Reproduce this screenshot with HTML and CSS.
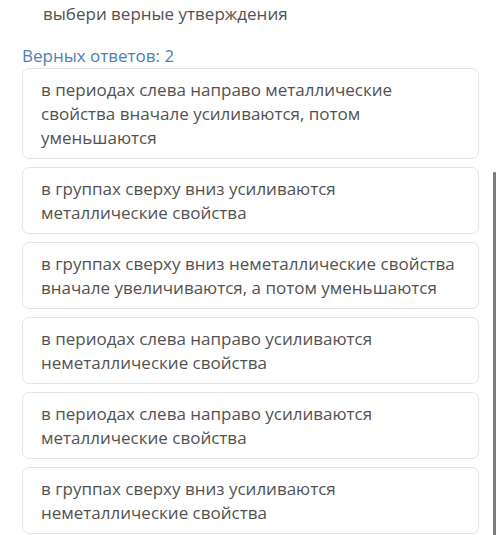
FILE: index.html
```html
<!DOCTYPE html>
<html lang="ru">
<head>
  <meta charset="UTF-8">
  <meta name="viewport" content="width=device-width, initial-scale=1.0">
  <title>выбери верные утверждения</title>
  <link rel="stylesheet" href="styles.css">
</head>
<body>
  <div class="quiz">
    <div class="question">выбери верные утверждения</div>

    <div class="hint">Верных ответов: 2</div>

    <div class="answers">
      <div class="answer">в периодах слева направо металлические свойства вначале усиливаются, потом уменьшаются</div>
      <div class="answer">в группах сверху вниз усиливаются металлические свойства</div>
      <div class="answer">в группах сверху вниз неметаллические свойства вначале увеличиваются, а потом уменьшаются</div>
      <div class="answer">в периодах слева направо усиливаются неметаллические свойства</div>
      <div class="answer">в периодах слева направо усиливаются металлические свойства</div>
      <div class="answer">в группах сверху вниз усиливаются неметаллические свойства</div>
    </div>
  </div>

  <!-- полоса прокрутки -->
  <div class="scrollbar"></div>
</body>
</html>
```

FILE: styles.css
```css
html,
body {
  margin: 0;
  background: #fff;
}

body {
  font-family: "Open Sans", "Liberation Sans", sans-serif;
  font-size: 17px;
  line-height: 24px;
  color: #525252;
  overflow: hidden;
}

.quiz {
  padding: 2px 21px 0 22px;
}

.question {
  padding-left: 21px;
}

.hint {
  margin-top: 18px;
  color: #4d7fb3;
}

.answers {
  display: flex;
  flex-direction: column;
  gap: 8px;
}

.answer {
  border: 1px solid #e5e5e5;
  border-radius: 7px;
  padding: 8.5px 18px;
}

.scrollbar {
  position: absolute;
  top: 172px;
  left: 493px;
  width: 3px;
  height: 400px;
  background: #7b7b7b;
  border-radius: 1px;
}
```
